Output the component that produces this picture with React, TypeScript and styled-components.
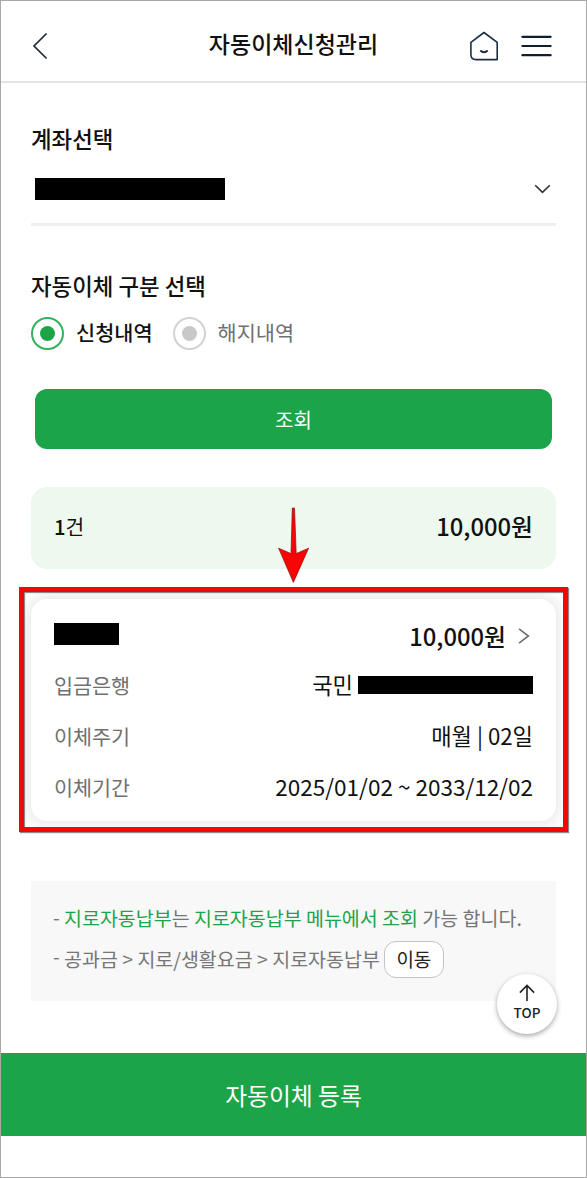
import React from "react";
import styled, { createGlobalStyle } from "styled-components";

const GREEN = "#1ba548";

const GlobalStyle = createGlobalStyle`
  *, *::before, *::after { box-sizing: border-box; }
  body { margin: 0; background: #fff; }
  button { font: inherit; border: 0; padding: 0; cursor: pointer; }
`;

const Screen = styled.div`
  position: relative;
  display: flex;
  flex-direction: column;
  width: 587px;
  height: 1178px;
  border: 1px solid #a8a8a8;
  background: #fff;
  color: #111;
  font-family: "Noto Sans CJK KR", "Noto Sans", sans-serif;
  white-space: nowrap;
  overflow: hidden;
`;

const Header = styled.header`
  display: grid;
  grid-template-columns: 120px 1fr 120px;
  align-items: center;
  height: 82px;
  padding: 9px 31px 0;
  border-bottom: 2px solid #e4e4e4;
`;

const Title = styled.h1`
  margin: 0;
  padding-bottom: 6px;
  font-size: 23px;
  font-weight: 500;
  line-height: 34px;
  text-align: center;
`;

const HeaderActions = styled.div`
  display: flex;
  justify-content: flex-end;
  align-items: center;
  gap: 22px;
  padding-right: 3px;
`;

const IconButton = styled.button`
  display: flex;
  width: max-content;
  background: none;
`;

const Content = styled.main`
  display: flex;
  flex-direction: column;
  padding: 39px 30px 0;
`;

const Label = styled.h2`
  margin: 0;
  font-size: 22.4px;
  font-weight: 500;
  line-height: 32px;
`;

const AccountSelect = styled.div`
  display: flex;
  align-items: center;
  justify-content: space-between;
  height: 72px;
  padding: 0 5px 0 4px;
  border-bottom: 3px solid #efefef;
  margin-bottom: 43px;
`;

const Redacted = styled.span<{ $w: number; $h: number }>`
  display: block;
  width: ${(p) => p.$w}px;
  height: ${(p) => p.$h}px;
  background: #000;
`;

const RadioGroup = styled.div`
  display: flex;
  gap: 20px;
  margin-top: 16px;
`;

const Radio = styled.label<{ $on?: boolean }>`
  display: flex;
  align-items: center;
  gap: 12px;
  height: 33px;
  font-size: 20.8px;
  line-height: 30px;
  font-weight: ${(p) => (p.$on ? 500 : 400)};
  color: ${(p) => (p.$on ? "#111" : "#707070")};
`;

const RadioText = styled.span`
  padding-bottom: 3px;
`;

const RadioMark = styled.span<{ $on?: boolean }>`
  display: flex;
  align-items: center;
  justify-content: center;
  width: 33px;
  height: 33px;
  border: 2px solid ${(p) => (p.$on ? "#35b05d" : "#d2d2d2")};
  border-radius: 50%;

  &::after {
    content: "";
    width: 15px;
    height: 15px;
    border-radius: 50%;
    background: ${(p) => (p.$on ? GREEN : "#c8c8c8")};
  }
`;

const SearchButton = styled.button`
  height: 60px;
  margin: 39px 4px 0;
  padding-top: 2px;
  border-radius: 12px;
  background: ${GREEN};
  color: #fff;
  font-size: 20px;
  line-height: 30px;
`;

const Summary = styled.section`
  display: flex;
  align-items: center;
  justify-content: space-between;
  height: 82px;
  margin-top: 38px;
  padding: 0 23px 4px;
  border-radius: 16px;
  background: #edf8ef;
`;

const Count = styled.span`
  font-size: 20.3px;
  line-height: 30px;

  b {
    font-weight: 500;
  }
`;

const Amount = styled.strong`
  font-size: 23.8px;
  font-weight: 500;
  line-height: 36px;
`;

const Highlight = styled.section`
  margin: 18px -12px 0;
  padding: 7px 7px 6px;
  border: 5px solid #f10808;
  outline: 1px solid rgba(120, 60, 60, 0.35);
  outline-offset: -1px;
  box-shadow: 1px 1px 1px rgba(0, 0, 0, 0.45), inset 1px 1px 1px rgba(0, 0, 0, 0.5);
  overflow: hidden;
`;

const Card = styled.div`
  height: 222px;
  padding: 18px 23px 0;
  border-radius: 16px;
  background: #fff;
  box-shadow: 0 0 14px 4px rgba(0, 0, 0, 0.09);
`;

const CardHead = styled.div`
  display: flex;
  align-items: center;
  justify-content: space-between;
  height: 38px;
  margin-bottom: 4px;
`;

const Payee = styled.div`
  padding-bottom: 5px;
`;

const CardAmount = styled.div`
  display: flex;
  align-items: center;
  gap: 12px;
  padding-right: 3px;
`;

const Row = styled.div`
  display: flex;
  align-items: center;
  justify-content: space-between;
  height: 51px;
`;

const Term = styled.span`
  padding-top: 1px;
  font-size: 20.7px;
  line-height: 30px;
  color: #707070;
`;

const Value = styled.span`
  display: flex;
  align-items: center;
  gap: 5px;
`;

const ValueText = styled.span<{ $size?: number }>`
  padding-bottom: 2px;
  font-size: ${(p) => p.$size ?? 22.2}px;
  line-height: 32px;
`;

const Notice = styled.ul`
  height: 120px;
  margin: 49px 0 0;
  padding: 16px 22px 0;
  list-style: none;
  background: #f8f8f8;
  color: #767676;
  font-size: 19.5px;
`;

const NoticeItem = styled.li<{ $lift?: number }>`
  display: flex;
  align-items: center;
  height: 41px;
  line-height: 36px;

  &::before {
    content: "-";
    width: 11px;
    padding-bottom: ${(p) => p.$lift ?? 2}px;
  }
`;

const Accent = styled.span`
  color: ${GREEN};
`;

const GoButton = styled.button`
  width: 60px;
  height: 37px;
  margin: 2px 0 0 4px;
  border: 1px solid #c4c4c4;
  border-radius: 12px;
  background: #fff;
  color: #222;
  font-size: 19px;
  line-height: 32px;
  padding-bottom: 2px;
`;

const RegisterButton = styled.button`
  height: 83px;
  margin-top: 52px;
  padding-top: 1px;
  background: ${GREEN};
  color: #fff;
  font-size: 23.8px;
  line-height: 36px;
`;

const TopButton = styled.button`
  position: absolute;
  right: 29px;
  top: 973px;
  display: flex;
  flex-direction: column;
  align-items: center;
  width: 60px;
  height: 60px;
  padding-top: 10px;
  border-radius: 50%;
  background: #fff;
  box-shadow: 0 2px 5px rgba(0, 0, 0, 0.35);
  color: #222;
  font-size: 13.5px;
  font-weight: 500;
  line-height: 20px;
`;

const Arrow = styled.svg`
  position: absolute;
  left: 276px;
  top: 505px;
`;

export default function App() {
  return (
    <Screen>
      <GlobalStyle />
      <Header>
        <IconButton aria-label="뒤로">
          <svg width="16" height="28" viewBox="0 0 16 28" fill="none" stroke="#1c2b3a" strokeWidth="1.7">
            <path d="M14.6 1.5 2 14l12.6 12.5" />
          </svg>
        </IconButton>
        <Title>자동이체신청관리</Title>
        <HeaderActions>
          <IconButton aria-label="홈">
            <svg width="30" height="30" viewBox="0 0 30 30" fill="none" stroke="#1c2f42" strokeWidth="1.6">
              <path d="M15 1.5 28.2 11.4V28.6H7.2Q1.9 28.6 1.9 23.5V11.4Z" strokeLinejoin="round" />
              <path d="M11.3 19.6Q15 23 18.7 19.6" strokeWidth="2" />
            </svg>
          </IconButton>
          <IconButton aria-label="메뉴">
            <svg width="31" height="22" viewBox="0 0 31 22" stroke="#0d1f30" strokeWidth="2.2" strokeLinecap="round">
              <path d="M1.4 1.8H29.6M1.4 11H29.6M1.4 20.2H29.6" />
            </svg>
          </IconButton>
        </HeaderActions>
      </Header>

      <Content>
        <Label>계좌선택</Label>
        <AccountSelect>
          <Redacted $w={190} $h={22} />
          <svg width="17" height="10" viewBox="0 0 17 10" fill="none" stroke="#333" strokeWidth="1.6">
            <path d="M1.2 1.2 8.5 8.4l7.3-7.2" />
          </svg>
        </AccountSelect>

        <Label>자동이체 구분 선택</Label>
        <RadioGroup>
          <Radio $on>
            <RadioMark $on />
            <RadioText>신청내역</RadioText>
          </Radio>
          <Radio>
            <RadioMark />
            <RadioText>해지내역</RadioText>
          </Radio>
        </RadioGroup>
        <SearchButton>조회</SearchButton>

        <Summary>
          <Count>
            <b>1</b>건
          </Count>
          <Amount>10,000원</Amount>
        </Summary>

        <Highlight>
          <Card>
            <CardHead>
              <Payee>
                <Redacted $w={65} $h={22} />
              </Payee>
              <CardAmount>
                <Amount>10,000원</Amount>
                <svg width="12" height="16" viewBox="0 0 12 16" fill="none" stroke="#6c6f73" strokeWidth="1.6">
                  <path d="M1 .9 10.4 8 1 15.1" />
                </svg>
              </CardAmount>
            </CardHead>
            <Row>
              <Term>입금은행</Term>
              <Value>
                <ValueText>국민</ValueText>
                <Redacted $w={175} $h={18} />
              </Value>
            </Row>
            <Row>
              <Term>이체주기</Term>
              <ValueText>매월 | 02일</ValueText>
            </Row>
            <Row>
              <Term>이체기간</Term>
              <ValueText $size={22.5}>2025/01/02 ~ 2033/12/02</ValueText>
            </Row>
          </Card>
        </Highlight>

        <Notice>
          <NoticeItem>
            <Accent>지로자동납부</Accent>는&nbsp;<Accent>지로자동납부 메뉴에서 조회</Accent>&nbsp;가능 합니다.
          </NoticeItem>
          <NoticeItem $lift={6}>
            공과금 &gt; 지로/생활요금 &gt; 지로자동납부
            <GoButton>이동</GoButton>
          </NoticeItem>
        </Notice>
      </Content>

      <RegisterButton>자동이체 등록</RegisterButton>

      <TopButton>
        <svg width="16" height="18" viewBox="0 0 16 18" fill="none" stroke="#222" strokeWidth="1.6">
          <path d="M8 17V1.4M.9 8.6 8 1.4l7.1 7.2" />
        </svg>
        TOP
      </TopButton>

      <Arrow width="34" height="80" viewBox="0 0 34 80">
        <path
          d="M15.3 2h2.2l1.7 45.6L31.6 42.2 16.4 76.4 1.6 42.2 14 47.6Z"
          fill="#fa0505"
          stroke="#8c1010"
          strokeWidth=".7"
        />
      </Arrow>
    </Screen>
  );
}
